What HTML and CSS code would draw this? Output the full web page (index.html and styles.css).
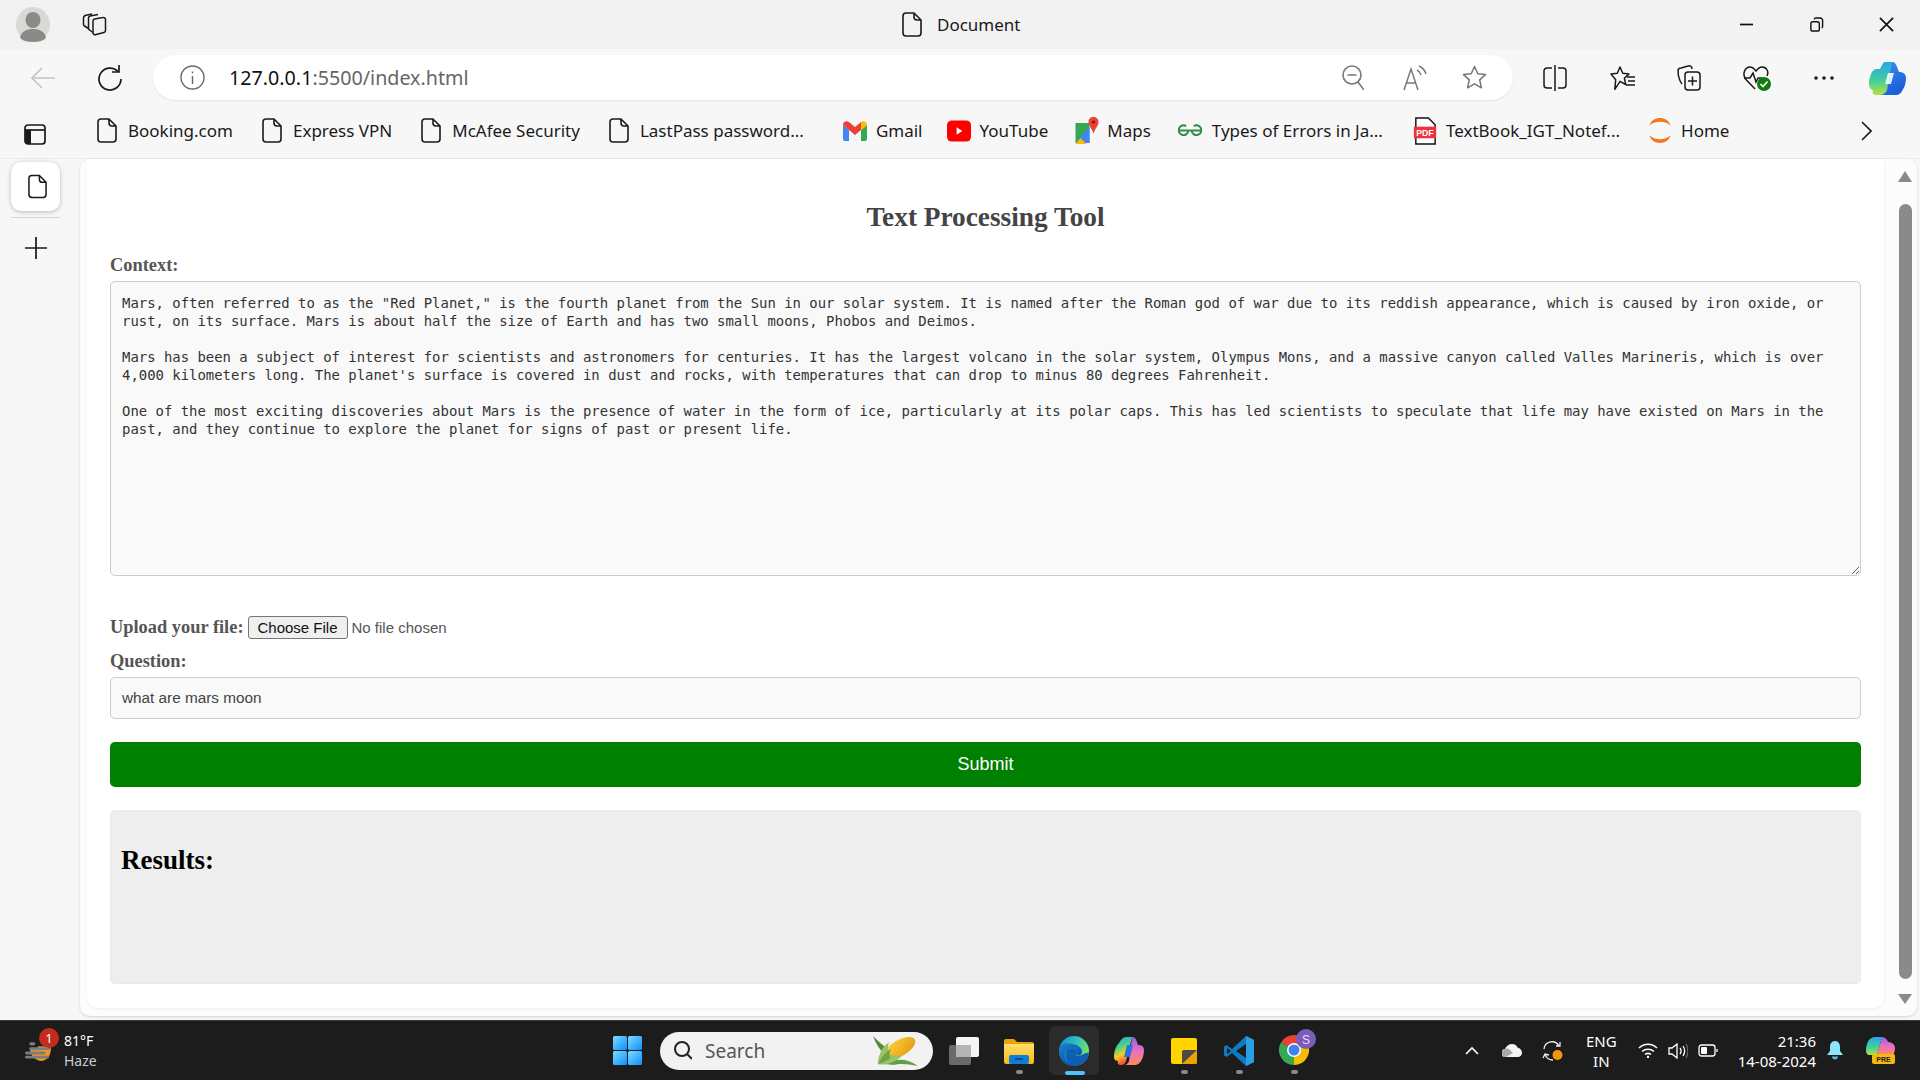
FILE: index.html
```html
<!DOCTYPE html>
<html lang="en">
<head>
    <meta charset="UTF-8">
    <title>Document</title>
    <link rel="stylesheet" href="styles.css">
</head>
<body>
    <svg class="defs" width="0" height="0">
        <defs>
            <symbol id="doc" viewBox="0 0 20 25">
                <path d="M4 1h8l7 7v13a3 3 0 0 1-3 3H4a3 3 0 0 1-3-3V4a3 3 0 0 1 3-3z M12 1v4a3 3 0 0 0 3 3h4" fill="none" stroke="currentColor" stroke-width="1.6" stroke-linejoin="round"/>
            </symbol>
            <linearGradient id="edgeA" x1="0" y1="0" x2="1" y2="0.5">
                <stop offset="0" stop-color="#0f8fd8"/>
                <stop offset="0.55" stop-color="#2fc1c0"/>
                <stop offset="1" stop-color="#7fe35c"/>
            </linearGradient>
            <linearGradient id="edgeB" x1="0" y1="0" x2="0.6" y2="1">
                <stop offset="0" stop-color="#1a7fd0"/>
                <stop offset="1" stop-color="#0b4fa0"/>
            </linearGradient>
            <linearGradient id="copA" x1="0" y1="0" x2="0" y2="1">
                <stop offset="0" stop-color="#2aa6e8"/>
                <stop offset="0.55" stop-color="#3fcf9a"/>
                <stop offset="1" stop-color="#b5e04a"/>
            </linearGradient>
            <linearGradient id="copB" x1="0" y1="0" x2="0.4" y2="1">
                <stop offset="0" stop-color="#3a8ff0"/>
                <stop offset="1" stop-color="#1a5fd8"/>
            </linearGradient>
            <linearGradient id="copC" x1="0" y1="0" x2="0" y2="1">
                <stop offset="0" stop-color="#9a5cf0"/>
                <stop offset="0.5" stop-color="#e870c0"/>
                <stop offset="1" stop-color="#ff8a5c"/>
            </linearGradient>
            <linearGradient id="copD" x1="0" y1="0" x2="0.3" y2="1">
                <stop offset="0" stop-color="#2a9ff0"/>
                <stop offset="0.4" stop-color="#45d08a"/>
                <stop offset="0.7" stop-color="#f5d020"/>
                <stop offset="1" stop-color="#f5503c"/>
            </linearGradient>
            <linearGradient id="winG" x1="0" y1="0" x2="1" y2="1">
                <stop offset="0" stop-color="#7fdcff"/>
                <stop offset="1" stop-color="#0a8fff"/>
            </linearGradient>
            <linearGradient id="cornG" x1="0" y1="0" x2="1" y2="1">
                <stop offset="0" stop-color="#ffd23c"/>
                <stop offset="1" stop-color="#e09a10"/>
            </linearGradient>
            <linearGradient id="folderG" x1="0" y1="0" x2="0" y2="1">
                <stop offset="0" stop-color="#ffdf6e"/>
                <stop offset="1" stop-color="#f5b90f"/>
            </linearGradient>
        </defs>
    </svg>

    <div class="titlebar">
        <svg class="avatar" viewBox="0 0 34 35">
            <ellipse cx="17" cy="17.500" rx="17" ry="17.500" fill="#d9d9d6"/>
            <ellipse cx="17" cy="13" rx="7.500" ry="8" fill="#8c8a86"/>
            <path d="M4 31c1-7 7-9 13-9s12 2 13 9c-3 3-8 4-13 4s-10-1-13-4z" fill="#8c8a86"/>
        </svg>
        <svg class="tabs-icon" viewBox="0 0 25 23" fill="none" stroke="#1a1a1a" stroke-width="1.500" stroke-linejoin="round">
            <path d="M11 8a2 2 0 0 1 1.500-2l8.500-1.500a2 2 0 0 1 2.500 2v11a2 2 0 0 1-1.500 2L14 21.500a2 2 0 0 1-3-2z"/>
            <path d="M11 19.500 7.500 17a2 2 0 0 1-1-2V5a2 2 0 0 1 1.500-2L16 1.500"/>
            <path d="M6.500 15.500 2.500 13a2 2 0 0 1-1-2V5a3 3 0 0 1 1.500-2.500L10 1"/>
        </svg>
        <div class="title">
            <svg class="title-doc"><use href="#doc"/></svg>
            <span>Document</span>
        </div>
        <div class="win-controls">
            <svg viewBox="0 0 16 16" stroke="#111" stroke-width="1.800" fill="none"><path d="M1 8h14"/></svg>
            <svg viewBox="0 0 16 16" stroke="#111" stroke-width="1.500" fill="none"><rect x="2" y="5" width="9" height="10" rx="2"/><path d="M5.500 2.500A2 2 0 0 1 7.500 1H12a2.500 2.500 0 0 1 2.500 2.500V10a2 2 0 0 1-1 1.700"/></svg>
            <svg viewBox="0 0 16 16" stroke="#111" stroke-width="1.800" fill="none"><path d="M1 1l14 14M15 1 1 15"/></svg>
        </div>
    </div>

    <div class="toolbar">
        <svg class="back" viewBox="0 0 24 24" fill="none" stroke="#c4c4c4" stroke-width="1.600"><path d="M1 12h23M11 2 1 12l10 10"/></svg>
        <svg class="reload" viewBox="0 0 25 26" fill="none" stroke="#1a1a1a" stroke-width="1.700"><path d="M21 6.500A11 11 0 1 0 24 14"/><path d="M22 0v7h-7"/></svg>
        <div class="address">
            <svg class="info" viewBox="0 0 25 25" fill="none" stroke="#666" stroke-width="1.400"><circle cx="12.500" cy="12.500" r="11.500"/><path d="M12.500 11v8M12.500 6.500v1.800"/></svg>
            <div class="url"><span class="host">127.0.0.1</span>:5500/index.html</div>
            <svg class="zoom-out" viewBox="0 0 22 26" fill="none" stroke="#777" stroke-width="1.600"><circle cx="10" cy="10" r="9"/><path d="M5.500 10h9M16 17l6 8"/></svg>
            <svg class="read" viewBox="0 0 24 26" fill="none" stroke="#777" stroke-width="1.500"><path d="M1 25 8 4l7 21M3.500 18h9"/><path d="M14 5c2 1 3.500 3 4 5M16 1c3.500 1.500 6 4.500 7 8"/></svg>
            <svg class="star" viewBox="0 0 25 25" fill="none" stroke="#777" stroke-width="1.500" stroke-linejoin="round"><path d="M12.500 1.500l3.300 7.300 7.700.8-5.800 5.300 1.700 7.900-6.900-4-6.900 4 1.700-7.900L1.500 9.600l7.700-.8z"/></svg>
        </div>
        <svg class="split" viewBox="0 0 24 26" fill="none" stroke="#1a1a1a" stroke-width="1.500"><path d="M9 3H4a3 3 0 0 0-3 3v14a3 3 0 0 0 3 3h5M15 3h5a3 3 0 0 1 3 3v14a3 3 0 0 1-3 3h-5M12 0v26"/></svg>
        <svg class="favs" viewBox="0 0 25 26" fill="none" stroke="#1a1a1a" stroke-width="1.500" stroke-linejoin="round"><path d="M10 2l2.800 6.200 6.200.7-4.600 4.300 1.300 6.300-5.700-3.200-5.200 8 .9-9.500L1 9l6.300-.8z"/><path d="M17 12h8M18 16h7M16 20h9"/></svg>
        <svg class="coll" viewBox="0 0 24 26" fill="none" stroke="#1a1a1a" stroke-width="1.500" stroke-linejoin="round"><rect x="8" y="7" width="15" height="18" rx="3"/><path d="M15.500 11.500v9M11 16h9"/><path d="M5 19C3 17 1 11 1 6a3 3 0 0 1 3-3l7-2a3 3 0 0 1 4 3"/></svg>
        <svg class="health" viewBox="0 0 28 26">
            <path d="M12 24 2.500 14C-1 9 2 2 7 2c3 0 4.500 2 6 4 1.500-2 3-4 6-4 5 0 7 5 5 9" fill="none" stroke="#1a1a1a" stroke-width="1.500"/>
            <path d="M1 13h6l3-5 3 9 2-4h4" fill="none" stroke="#1a1a1a" stroke-width="1.500"/>
            <circle cx="21" cy="19" r="7" fill="#107c10"/>
            <path d="M17.500 19l2.500 2.500 4.500-5" fill="none" stroke="#fff" stroke-width="1.600"/>
        </svg>
        <svg class="more" viewBox="0 0 20 4" fill="#1a1a1a"><circle cx="2" cy="2" r="1.800"/><circle cx="10" cy="2" r="1.800"/><circle cx="18" cy="2" r="1.800"/></svg>
        <svg class="copilot-big" viewBox="0 0 37 34">
            <path d="M16 1h7c2 0 3 2 2.500 4L18 29c-1 3-3 5-6 5H7c-3 0-4-2-3-5 1 0-2 0-3-2-2-4-1-9 1-14 1-3 3-5 6-5h3l2-4c1-2 2-3 3-3z" fill="url(#copA)"/>
            <path d="M23 1c3 0 4 2 5 5l2 5c3 0 7 1 7 6 0 6-2 10-4 13-1 2-3 4-6 4H11c4 0 6-3 7-5z" fill="url(#copB)"/>
            <path d="M19 12h6l-3 11h-6z" fill="#fff" opacity="0.85"/>
        </svg>
    </div>

    <div class="bookmarks">
        <svg class="panel-icon" viewBox="0 0 22 21"><rect x="1" y="1" width="20" height="19" rx="3" fill="none" stroke="#1a1a1a" stroke-width="1.700"/><path d="M1 6h20" stroke="#1a1a1a" stroke-width="1.700"/><path d="M1 6h6v14H4a3 3 0 0 1-3-3z" fill="#1a1a1a"/></svg>
        <a class="bm first"><svg class="bm-doc"><use href="#doc"/></svg>Booking.com</a>
        <a class="bm"><svg class="bm-doc"><use href="#doc"/></svg>Express VPN</a>
        <a class="bm"><svg class="bm-doc"><use href="#doc"/></svg>McAfee Security</a>
        <a class="bm"><svg class="bm-doc"><use href="#doc"/></svg>LastPass password...</a>
        <a class="bm logo bm-gmail">
            <svg class="bm-logo" viewBox="0 0 24 20">
                <path d="M0 4v14a2 2 0 0 0 2 2h4V9z" fill="#4285f4"/>
                <path d="M24 4v14a2 2 0 0 1-2 2h-4V9z" fill="#34a853"/>
                <path d="M0 4c0-3 3-5 6-3l6 5 6-5v8l-6 5-6-5v0z" fill="#ea4335"/>
                <path d="M18 1c3-2 6 0 6 3l-6 5z" fill="#fbbc04"/>
            </svg>Gmail</a>
        <a class="bm logo bm-yt">
            <svg class="bm-logo" viewBox="0 0 25 22">
                <rect x="0" y="0" width="25" height="22" rx="5" fill="#f00"/>
                <path d="M10 7l6 4-6 4z" fill="#fff"/>
            </svg>YouTube</a>
        <a class="bm logo bm-maps">
            <svg class="bm-logo maps" viewBox="0 0 23 28">
                <path d="M0 6h14v20H0z" fill="#34a853"/>
                <path d="M0 26 14 10v16z" fill="#4285f4"/>
                <path d="M0 27 5 21l6 6H2z" fill="#fbbc04"/>
                <path d="M18 0c3 0 5 2 5 5 0 4-4 7-5 12-1-5-5-8-5-12 0-3 2-5 5-5z" fill="#ea4335"/>
                <circle cx="18" cy="5" r="1.600" fill="#7a1a12"/>
            </svg>Maps</a>
        <a class="bm logo bm-gfg">
            <svg class="bm-logo gfg" viewBox="0 0 22 12" fill="none" stroke="#2f8d46" stroke-width="1.800">
                <path d="M1 6h20M9.500 6a4.500 4.500 0 1 1-2-4M12.500 6a4.500 4.500 0 1 0 2-4"/>
            </svg>Types of Errors in Ja...</a>
        <a class="bm logo bm-pdf">
            <svg class="bm-logo pdf" viewBox="0 0 23 29">
                <path d="M2 1h13l7 7v20H2z" fill="#fff" stroke="#111" stroke-width="1.500"/>
                <rect x="0" y="10" width="23" height="12" fill="#f0323c"/>
                <text x="11.500" y="19.500" class="pdf-text">PDF</text>
            </svg>TextBook_IGT_Notef...</a>
        <a class="bm logo bm-home">
            <svg class="bm-logo home" viewBox="0 0 24 28" fill="#f37726">
                <path d="M1 9C3 3 7 1 12 1s9 2 11 8C20 6 16 5 12 5S4 6 1 9z"/>
                <path d="M1 19c2 6 6 8 11 8s9-2 11-8c-3 3-7 4-11 4S4 22 1 19z"/>
            </svg>Home</a>
        <svg class="bm-more" viewBox="0 0 11 20" fill="none" stroke="#1a1a1a" stroke-width="1.600"><path d="M1 1l9 9-9 9"/></svg>
    </div>

    <div class="main">
        <div class="sidebar">
            <div class="side-tile"><svg class="side-doc"><use href="#doc"/></svg></div>
            <div class="side-line"></div>
            <svg class="side-plus" viewBox="0 0 22 22" stroke="#1a1a1a" stroke-width="1.700"><path d="M0 11h22M11 0v22"/></svg>
        </div>
        <div class="card">
            <div class="page">
                <h1>Text Processing Tool</h1>
                <label class="lbl" for="context">Context:</label>
                <textarea id="context" spellcheck="false">Mars, often referred to as the "Red Planet," is the fourth planet from the Sun in our solar system. It is named after the Roman god of war due to its reddish appearance, which is caused by iron oxide, or rust, on its surface. Mars is about half the size of Earth and has two small moons, Phobos and Deimos.

Mars has been a subject of interest for scientists and astronomers for centuries. It has the largest volcano in the solar system, Olympus Mons, and a massive canyon called Valles Marineris, which is over 4,000 kilometers long. The planet's surface is covered in dust and rocks, with temperatures that can drop to minus 80 degrees Fahrenheit.

One of the most exciting discoveries about Mars is the presence of water in the form of ice, particularly at its polar caps. This has led scientists to speculate that life may have existed on Mars in the past, and they continue to explore the planet for signs of past or present life.</textarea>
                <div class="upload">
                    <label class="lbl-inline" for="file">Upload your file:</label>
                    <input type="file" id="file">
                </div>
                <label class="lbl" for="question">Question:</label>
                <input type="text" id="question" value="what are mars moon">
                <button class="submit">Submit</button>
                <div class="results"><h2>Results:</h2></div>
            </div>
            <div class="scrollbar">
                <div class="arrow-up"></div>
                <div class="thumb"></div>
                <div class="arrow-down"></div>
            </div>
        </div>
    </div>

    <div class="taskbar">
        <div class="weather">
            <svg class="weather-icon" viewBox="0 0 35 35">
                <path d="M6 22h24c0 7-5 13-11 13S6 29 6 22z" fill="#f7931e"/>
                <path d="M15 18h15v5H15z" fill="#f7b733"/>
                <g fill="#7d7d7d"><rect x="5" y="13" width="7" height="4" rx="2"/><rect x="5" y="19" width="25" height="3.500" rx="1.700"/><rect x="0" y="24" width="24" height="3.500" rx="1.700"/><rect x="0" y="29" width="28" height="3" rx="1.500"/></g>
            </svg>
            <span class="badge">1</span>
            <div class="weather-text"><div>81°F</div><div class="haze">Haze</div></div>
        </div>
        <svg class="start" viewBox="0 0 29 29" fill="url(#winG)">
            <rect x="0" y="0" width="14" height="14" rx="1.500"/><rect x="15" y="0" width="14" height="14" rx="1.500"/><rect x="0" y="15" width="14" height="14" rx="1.500"/><rect x="15" y="15" width="14" height="14" rx="1.500"/>
        </svg>
        <div class="search">
            <svg class="search-icon" viewBox="0 0 18 19" fill="none" stroke="#222" stroke-width="2"><circle cx="8" cy="8" r="7"/><path d="M13 13l5 5"/></svg>
            <span>Search</span>
            <svg class="corn" viewBox="0 0 48 32">
                <path d="M1 1c3 8 7 14 12 19l4-6C11 11 6 6 1 1z" fill="#4f8f3a"/>
                <path d="M12 29c10-5 22-7 34 2-10-2-18-3-24-1z" fill="#5f9f48"/>
                <ellipse cx="28" cy="13" rx="17" ry="8" transform="rotate(-30 28 13)" fill="url(#cornG)"/>
                <path d="M6 29C6 20 10 12 17 7c-2 7-1 11 2 13 3 1 8 1 12 0-5 5-11 8-17 9-3 .500-6 1-8 0z" fill="#9bc46a"/>
                <path d="M6 29c4-8 8-12 13-15-2 5-2 7 0 9-4 3-9 5-13 6z" fill="#6da544"/>
            </svg>
        </div>
        <div class="slot">
            <svg class="taskview" viewBox="0 0 30 28"><rect x="0" y="8" width="22" height="20" rx="2" fill="#6a6a6a"/><rect x="7" y="0" width="23" height="20" rx="2" fill="#f4f4f4"/><rect x="7" y="8" width="15" height="12" fill="#b4b4b4"/></svg>
        </div>
        <div class="slot running">
            <svg class="folder" viewBox="0 0 30 26">
                <path d="M0 3a2 2 0 0 1 2-2h8l3 3h15a2 2 0 0 1 2 2v4H0z" fill="#e5a50a"/>
                <path d="M0 6h30v18a2 2 0 0 1-2 2H2a2 2 0 0 1-2-2z" fill="url(#folderG)"/>
                <rect x="5" y="17" width="20" height="9" rx="2" fill="#0f7dd8"/>
                <path d="M11 21h8" stroke="#0a3d80" stroke-width="1.500"/>
            </svg>
        </div>
        <div class="slot active">
            <div class="tile">
                <svg class="edge" viewBox="0 0 30 30">
                    <circle cx="15" cy="15" r="15" fill="url(#edgeA)"/>
                    <path d="M0 15C1 6 8 7 14 8c6 1 10 5 9 9-1 3-5 3-6 1 1-5-4-7-8-5-5 3-4 12 2 15 3 1.500 7 1.500 10 .5-3 2-6 2-8 2C6 30 0 23 0 15z" fill="url(#edgeB)"/>
                    <path d="M9 13c4-2 9 0 8 5-1 2 3 2 6 1 2-1 5-3 7-2-1 8-8 13-15 13-6-1-12-10-6-17z" fill="#0e5fb4"/>
                </svg>
            </div>
        </div>
        <div class="slot">
            <svg class="copilot" viewBox="0 0 30 30">
                <path d="M12 1h6L12 25c-1 3-3 4-5 4-3 0-4-2-3-4-2 0-4-1-4-4 0-6 2-11 5-14 2-3 4-6 7-6z" fill="url(#copD)"/>
                <path d="M18 1c3 0 4 2 5 5l1 3c3 0 6 1 6 5 0 6-3 15-9 15H10c3 0 4-2 5-4z" fill="url(#copC)"/>
                <path d="M13 9h6l-3 12h-6z" fill="#2a6fe0"/>
            </svg>
        </div>
        <div class="slot running">
            <svg class="sticky" viewBox="0 0 26 26">
                <rect width="26" height="26" rx="2" fill="#ffd400"/>
                <path d="M26 12v12a2 2 0 0 1-2 2H11z" fill="#e8a400"/>
                <path d="M11 26V14a2 2 0 0 1 2-2h13z" fill="#4a4a4a"/>
            </svg>
        </div>
        <div class="slot running">
            <svg class="vscode" viewBox="0 0 30 30">
                <path d="M22 0 8 13 2.500 9 0 10.500v9L2.500 21 8 17l14 13 8-4V4z" fill="#0e7ac4"/>
                <path d="M22 0l8 4v22l-8 4z" fill="#2a9fe6"/>
                <path d="M22 8 12 15l10 7z" fill="#1c1c1c"/>
                <path d="M3 12l4 3-4 3z" fill="#1c1c1c"/>
            </svg>
        </div>
        <div class="slot running">
            <svg class="chrome" viewBox="0 0 37 37">
                <path d="M15 21 2 13.500a15 15 0 0 1 26 0z" fill="#ea4335"/>
                <path d="M15 21 2 13.500A15 15 0 0 0 15 36z" fill="#34a853"/>
                <path d="M15 21v15a15 15 0 0 0 13-22.500z" fill="#fbbc04"/>
                <circle cx="15" cy="21" r="7" fill="#fff"/>
                <circle cx="15" cy="21" r="5.500" fill="#3f83f0"/>
                <circle cx="27" cy="10" r="10" fill="#7b5cb8"/>
                <text x="27" y="14.500" class="chrome-s">S</text>
            </svg>
        </div>
        <div class="tray">
            <svg class="t-chevron" viewBox="0 0 14 9" fill="none" stroke="#fff" stroke-width="1.600"><path d="M1 8l6-6 6 6"/></svg>
            <svg class="t-cloud" viewBox="0 0 20 13"><path d="M4 13a4 4 0 0 1-1-8C4 2 7 0 10 0c3 0 5 2 6 4 2 0 4 2 4 5 0 2-2 4-4 4z" fill="#f4f4f4"/><path d="M3 5c2-1 4 0 5 1l3 3-7 4a4 4 0 0 1-1-8z" fill="#aaa"/></svg>
            <svg class="t-sync" viewBox="0 0 22 20" fill="none" stroke="#eee" stroke-width="1.300"><path d="M2 8a8 8 0 0 1 15-3M18 1v4h-4M3 13a8 8 0 0 0 8 6M1 17l2-4 4 1"/><circle cx="15.500" cy="14" r="5" fill="#f7930e" stroke="none"/></svg>
            <div class="t-lang"><div>ENG</div><div>IN</div></div>
            <svg class="t-wifi" viewBox="0 0 20 15" fill="none" stroke="#fff" stroke-width="1.500"><path d="M1 5c5-5 13-5 18 0M4 8.500c3.500-3 8.500-3 12 0M7 11.500c2-1.500 4-1.500 6 0"/><circle cx="10" cy="14" r="1.200" fill="#fff" stroke="none"/></svg>
            <svg class="t-sound" viewBox="0 0 20 16" fill="none" stroke="#fff" stroke-width="1.300"><path d="M1 5h3l5-4v14l-5-4H1zM12 5c1.500 2 1.500 4 0 6M15 3c2 3 2 7 0 10"/><path d="M18 1c2.500 4 2.500 10 0 14" stroke="#666"/></svg>
            <svg class="t-batt" viewBox="0 0 20 13" fill="none" stroke="#fff" stroke-width="1.300"><rect x="1" y="1" width="16" height="11" rx="2.500"/><rect x="3" y="3" width="6" height="7" rx="1" fill="#fff" stroke="none"/><path d="M19 5v3"/></svg>
            <div class="t-clock"><div>21:36</div><div>14-08-2024</div></div>
            <svg class="t-bell" viewBox="0 0 16 19" fill="#8fe3ff"><path d="M8 0c3.500 0 5 3 5 6v4l3 4H0l3-4V6c0-3 1.500-6 5-6z"/><path d="M5 15.500h6c0 2-1.500 3-3 3s-3-1-3-3z" fill="#5fb8d8"/></svg>
            <svg class="t-pre" viewBox="0 0 29 27">
                <path d="M9 0h7L11 18H4c-3 0-4-2-4-5C0 7 3 0 9 0z" fill="url(#copA)"/>
                <path d="M16 0c3 0 5 2 6 5 3 0 7 2 7 6 0 3-1 6-2 7H11z" fill="url(#copC)"/>
                <rect x="6" y="17" width="23" height="10" rx="2" fill="#f5b90f"/>
                <text x="17.500" y="25" class="pre-text">PRE</text>
            </svg>
        </div>
    </div>
</body>
</html>
```

FILE: styles.css
```css
* {
    box-sizing: border-box;
}
html, body {
    margin: 0;
    height: 100%;
    overflow: hidden;
}
body {
    display: flex;
    flex-direction: column;
    font-family: "Noto Sans", sans-serif;
    background-color: #f7f7f7;
    color: #1a1a1a;
}
svg {
    display: block;
    flex: none;
}
.defs {
    position: absolute;
}

/* title bar */
.titlebar {
    display: flex;
    align-items: center;
    height: 49px;
    flex: none;
    background-color: #f2f2f2;
}
.avatar {
    width: 34px;
    height: 35px;
    margin-left: 16px;
}
.tabs-icon {
    width: 25px;
    height: 23px;
    margin-left: 32px;
}
.title {
    display: flex;
    align-items: center;
    gap: 15px;
    margin-left: 795px;
    font-size: 17px;
}
.title-doc {
    width: 20px;
    height: 25px;
}
.win-controls {
    display: flex;
    align-items: center;
    gap: 55px;
    margin-left: auto;
    padding-right: 26px;
}
.win-controls svg {
    width: 15px;
    height: 15px;
}

/* toolbar */
.toolbar {
    display: flex;
    align-items: center;
    height: 54px;
    flex: none;
    padding-top: 6px;
    padding-bottom: 3px;
    padding-left: 31px;
}
.back {
    width: 24px;
    height: 24px;
}
.reload {
    width: 25px;
    height: 26px;
    margin-left: 42px;
}
.address {
    display: flex;
    align-items: center;
    width: 1360px;
    height: 45px;
    margin-left: 31px;
    padding: 0 26px 0 27px;
    background-color: #fff;
    border-radius: 23px;
    box-shadow: 0 1px 2px rgba(0, 0, 0, 0.08);
}
.info {
    width: 25px;
    height: 25px;
}
.url {
    margin-left: 24px;
    font-size: 19.7px;
    color: #666;
}
.host {
    color: #111;
}
.zoom-out {
    width: 22px;
    height: 26px;
    margin-left: auto;
}
.read {
    width: 24px;
    height: 26px;
    margin-left: 39px;
}
.star {
    width: 25px;
    height: 25px;
    margin-left: 35px;
}
.split {
    width: 24px;
    height: 26px;
    margin-left: 30px;
}
.favs {
    width: 25px;
    height: 26px;
    margin-left: 43px;
}
.coll {
    width: 24px;
    height: 26px;
    margin-left: 42px;
}
.health {
    width: 28px;
    height: 26px;
    margin-left: 42px;
}
.more {
    width: 20px;
    height: 4px;
    margin-left: 43px;
}
.copilot-big {
    width: 37px;
    height: 34px;
    margin-left: 35px;
}

/* bookmarks */
.bookmarks {
    display: flex;
    align-items: center;
    height: 56px;
    flex: none;
    padding-left: 24px;
    border-bottom: 1px solid #ececec;
    font-size: 17px;
}
.panel-icon {
    width: 22px;
    height: 21px;
    margin-top: 7px;
}
.bm {
    display: flex;
    align-items: center;
    gap: 11px;
    margin-left: 29px;
    white-space: nowrap;
}
.bm.first {
    margin-left: 51px;
}
.bm.logo {
    gap: 9px;
    margin-left: 27px;
}
.bm.bm-gmail {
    margin-left: 39px;
}
.bm.bm-yt {
    margin-left: 24px;
}
.bm.bm-maps {
    gap: 8px;
}
.bm.bm-gfg {
    gap: 10px;
}
.bm.bm-pdf {
    margin-left: 30px;
}
.bm.bm-home {
    margin-left: 28px;
}
.bm-doc {
    width: 20px;
    height: 25px;
}
.bm-logo {
    width: 24px;
    height: 22px;
}
.maps, .pdf {
    height: 28px;
}
.home {
    height: 27px;
}
.gfg {
    height: 13px;
}
.pdf-text {
    font-family: "Liberation Sans", sans-serif;
    font-size: 9px;
    font-weight: bold;
    fill: #fff;
    text-anchor: middle;
}
.bm-more {
    width: 11px;
    height: 20px;
    margin-left: auto;
    margin-right: 48px;
}

/* main area */
.main {
    display: flex;
    flex: 1;
    min-height: 0;
}
.sidebar {
    display: flex;
    flex-direction: column;
    align-items: center;
    width: 80px;
    flex: none;
    padding: 3px 9px 0 0;
}
.side-tile {
    display: flex;
    align-items: center;
    justify-content: center;
    width: 49px;
    height: 49px;
    background-color: #fff;
    border-radius: 10px;
    box-shadow: 0 1px 4px rgba(0, 0, 0, 0.25);
}
.side-doc {
    width: 19px;
    height: 25px;
    margin-left: 3px;
}
.side-line {
    width: 49px;
    height: 1px;
    margin-top: 6px;
    background-color: #d6d6d6;
}
.side-plus {
    width: 22px;
    height: 22px;
    margin-top: 19px;
}
.card {
    display: flex;
    flex: 1;
    margin: 0 3px 4px 0;
    padding: 0 0 8px 7px;
    background-color: #fcfcfc;
    border-radius: 10px;
    box-shadow: 0 1px 3px rgba(0, 0, 0, 0.14);
}
.page {
    display: flex;
    flex-direction: column;
    flex: 1;
    min-width: 0;
    padding: 43px 23px 0;
    background-color: #fff;
    border-radius: 0 0 10px 10px;
    box-shadow: 0 1px 3px rgba(0, 0, 0, 0.06);
    font-family: "Liberation Serif", serif;
}
h1 {
    margin: 0 0 24px;
    font-size: 27.3px;
    line-height: 30px;
    font-weight: bold;
    text-align: center;
    color: #444;
}
.lbl {
    display: block;
    height: 18px;
    margin-bottom: 7px;
    font-size: 18.4px;
    line-height: 18px;
    font-weight: bold;
    color: #555;
}
textarea {
    width: 100%;
    height: 295px;
    flex: none;
    padding: 12px 11px;
    border: 1px solid #ccc;
    border-radius: 5px;
    background-color: #f9f9f9;
    color: #333;
    font-family: "DejaVu Sans Mono", monospace;
    font-size: 13.93px;
    line-height: 18px;
}
.upload {
    display: flex;
    align-items: center;
    gap: 4px;
    height: 23px;
    margin-top: 40px;
    margin-bottom: 13px;
}
.lbl-inline {
    font-size: 18.4px;
    font-weight: bold;
    color: #555;
}
input[type="file"] {
    font-family: "Liberation Sans", sans-serif;
    font-size: 15px;
    color: #555;
}
input[type="file"]::file-selector-button {
    width: 100px;
    height: 23px;
    margin-right: 4px;
    padding: 0;
    border: 1px solid #767676;
    border-radius: 3px;
    background-color: #efefef;
    color: #111;
}
input[type="text"] {
    width: 100%;
    height: 42px;
    flex: none;
    padding: 0 11px;
    border: 1px solid #ccc;
    border-radius: 5px;
    background-color: #f9f9f9;
    color: #444;
    font-family: "Liberation Sans", sans-serif;
    font-size: 15.3px;
}
.submit {
    height: 45px;
    flex: none;
    margin-top: 23px;
    border: none;
    border-radius: 5px;
    background-color: #008000;
    color: #fff;
    font-family: "Liberation Sans", sans-serif;
    font-size: 18px;
}
.results {
    height: 174px;
    flex: none;
    margin-top: 23px;
    padding: 33px 10px 0;
    border: 1px solid #e9e9e9;
    border-radius: 5px;
    background-color: #eee;
}
.results h2 {
    margin: 0;
    font-size: 27px;
    line-height: 32px;
    color: #000;
}
.scrollbar {
    display: flex;
    flex-direction: column;
    align-items: center;
    width: 33px;
    flex: none;
    padding-top: 12px;
    padding-left: 9px;
    padding-bottom: 4px;
}
.arrow-up, .arrow-down {
    width: 0;
    height: 0;
    border-left: 7.5px solid transparent;
    border-right: 7.5px solid transparent;
}
.arrow-up {
    border-bottom: 11px solid #8a8a8a;
}
.arrow-down {
    margin-top: 15px;
    border-top: 10px solid #8a8a8a;
}
.thumb {
    flex: 1;
    width: 13px;
    margin-top: 22px;
    background-color: #8a8a8a;
    border-radius: 7px;
}

/* taskbar */
.taskbar {
    display: flex;
    align-items: center;
    height: 60px;
    flex: none;
    border-top: 1px solid #3c3c3c;
    background-color: #1c1c1c;
    color: #fff;
    font-size: 14px;
}
.weather {
    position: relative;
    display: flex;
    align-items: center;
    gap: 9px;
    width: 613px;
    flex: none;
    padding-left: 25px;
}
.weather-icon {
    align-self: flex-start;
    width: 30px;
    height: 30px;
}
.badge {
    position: absolute;
    top: -3px;
    left: 39px;
    width: 20px;
    height: 20px;
    background-color: #c42b1c;
    border-radius: 50%;
    font-size: 13px;
    line-height: 20px;
    text-align: center;
}
.weather-text {
    line-height: 20px;
    font-size: 14px;
}
.haze {
    color: #ccc;
}
.start {
    width: 29px;
    height: 29px;
}
.search {
    display: flex;
    align-items: center;
    width: 273px;
    height: 38px;
    margin-left: 18px;
    margin-right: 3.5px;
    padding: 0 13px 0 14px;
    background-color: #f2f2f2;
    border-radius: 19px;
    color: #555;
    font-size: 19px;
}
.search-icon {
    width: 18px;
    height: 19px;
    margin-right: 13px;
}
.corn {
    width: 48px;
    height: 32px;
    margin-left: auto;
}
.slot {
    position: relative;
    display: flex;
    align-items: center;
    justify-content: center;
    width: 55px;
    height: 59px;
    flex: none;
}
.running::after {
    content: "";
    position: absolute;
    left: 24px;
    bottom: 6px;
    width: 7px;
    height: 4px;
    background-color: #8a8a8a;
    border-radius: 2px;
}
.tile {
    display: flex;
    align-items: center;
    justify-content: center;
    width: 50px;
    height: 49px;
    background-color: #2b2b2b;
    border-radius: 6px;
}
.active::after {
    content: "";
    position: absolute;
    left: 18px;
    bottom: 5px;
    width: 20px;
    height: 4px;
    background-color: #4cc2ff;
    border-radius: 2px;
}
.taskview {
    width: 30px;
    height: 28px;
}
.folder {
    width: 30px;
    height: 26px;
}
.edge, .copilot, .vscode {
    width: 30px;
    height: 30px;
}
.sticky {
    width: 26px;
    height: 26px;
}
.chrome {
    width: 37px;
    height: 37px;
    margin-left: 7px;
    margin-top: -6px;
}
.chrome-s {
    font-family: "Liberation Sans", sans-serif;
    font-size: 12px;
    fill: #e6def5;
    text-anchor: middle;
}
.tray {
    display: flex;
    align-items: center;
    flex: 1;
    justify-content: flex-end;
    padding-right: 25px;
}
.t-chevron {
    width: 14px;
    height: 9px;
}
.t-cloud {
    width: 20px;
    height: 13px;
    margin-left: 23px;
}
.t-sync {
    width: 22px;
    height: 20px;
    margin-left: 20px;
}
.t-lang {
    margin-left: 22px;
    font-size: 15px;
    line-height: 20px;
    text-align: center;
}
.t-wifi {
    width: 20px;
    height: 15px;
    margin-left: 21px;
}
.t-sound {
    width: 20px;
    height: 16px;
    margin-left: 10px;
}
.t-batt {
    width: 20px;
    height: 13px;
    margin-left: 10px;
}
.t-clock {
    margin-left: 20px;
    font-size: 15px;
    line-height: 20px;
    text-align: right;
}
.t-bell {
    width: 16px;
    height: 19px;
    margin-left: 11px;
}
.t-pre {
    width: 29px;
    height: 27px;
    margin-left: 23px;
}
.pre-text {
    font-family: "Liberation Sans", sans-serif;
    font-size: 7px;
    font-weight: bold;
    fill: #222;
    text-anchor: middle;
}
```
